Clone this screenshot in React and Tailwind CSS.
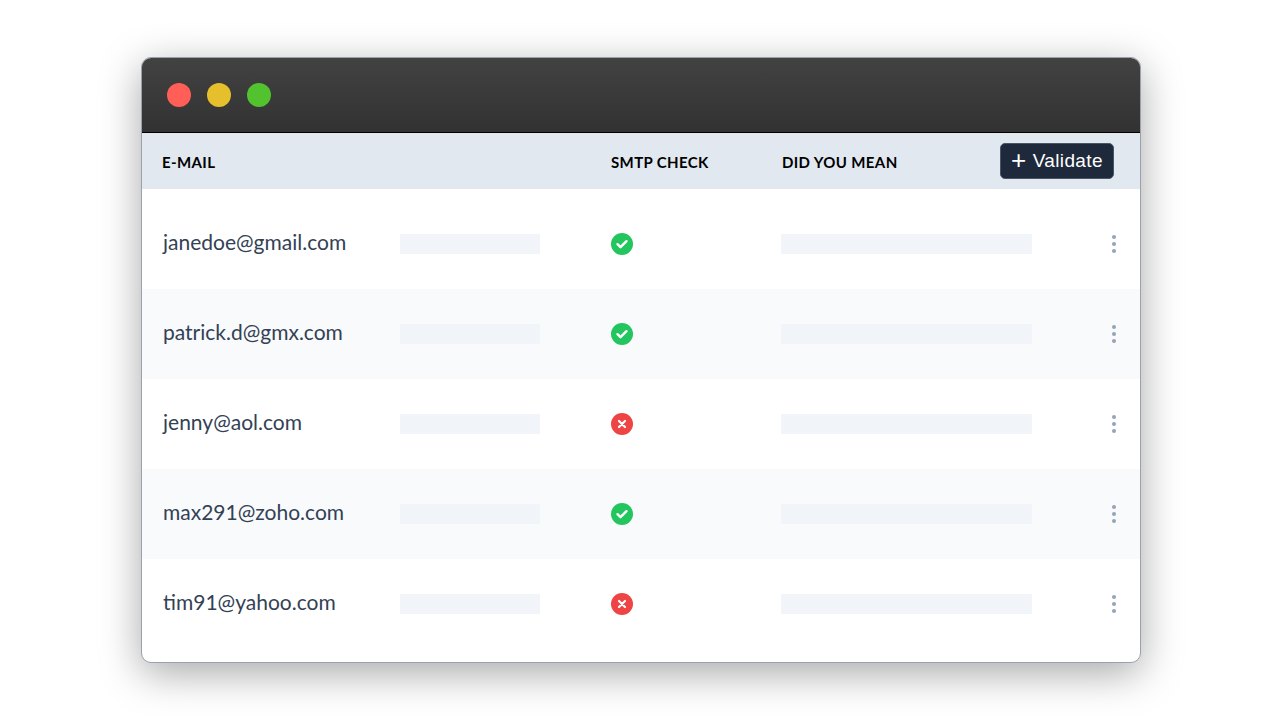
import React from 'react';

const rows = [
  { email: 'janedoe@gmail.com', ok: true },
  { email: 'patrick.d@gmx.com', ok: true },
  { email: 'jenny@aol.com', ok: false },
  { email: 'max291@zoho.com', ok: true },
  { email: 'tim91@yahoo.com', ok: false },
];

const Status = ({ ok }) => (
  <svg width="22" height="22" viewBox="0 0 22 22">
    <circle cx="11" cy="11" r="11" fill={ok ? '#22c55e' : '#ef4444'} />
    {ok ? (
      <path d="M6.5 11.2l3 3 6-6" stroke="#fff" strokeWidth="2.4" fill="none" strokeLinecap="round" strokeLinejoin="round" />
    ) : (
      <path d="M8 8l6 6M14 8l-6 6" stroke="#fff" strokeWidth="2.2" fill="none" strokeLinecap="round" />
    )}
  </svg>
);

const App = () => {
  return (
    <div className="w-[1280px] h-[720px] bg-white pt-[57px] pl-[141px]" style={{ fontFamily: 'Lato, "Noto Sans", sans-serif' }}>
      <div className="w-[1000px] h-[606px] rounded-[10px] overflow-hidden border border-gray-400 bg-white shadow-[0_10px_40px_rgba(0,0,0,0.35)] flex flex-col">
        <div className="h-[75px] bg-gradient-to-b from-[#424242] to-[#323232] border-b border-black flex items-center pl-[25px] gap-[16px] shrink-0">
          <div className="w-6 h-6 rounded-full bg-[#ff5f57]" />
          <div className="w-6 h-6 rounded-full bg-[#e6bf2c]" />
          <div className="w-6 h-6 rounded-full bg-[#53c22f]" />
        </div>
        <div className="h-[56px] bg-[#e2e8f0] flex items-center pl-[20px] text-[15px] font-bold text-black tracking-wide shrink-0">
          <div className="w-[449px] pt-[3px]">E-MAIL</div>
          <div className="w-[171px] pt-[3px]">SMTP CHECK</div>
          <div className="w-[218px] pt-[3px]">DID YOU MEAN</div>
          <button className="h-[36px] w-[114px] bg-[#1e293b] rounded-[5px] border border-[#475569] text-white text-[19px] font-medium flex items-center justify-center gap-1.5" style={{ fontFamily: '"Liberation Sans", Arial, sans-serif' }}>
            <span className="text-[26px] leading-none -mt-[2px]">+</span>Validate
          </button>
        </div>
        <div className="h-[10px] shrink-0" />
        {rows.map((r, i) => (
          <div key={r.email} className={`h-[90px] flex items-center pl-[21px] shrink-0 ${i % 2 ? 'bg-[#f8fafc]' : 'bg-white'}`}>
            <div className="w-[237px] text-[21px] text-[#334155] -mt-[4px]">{r.email}</div>
            <div className="w-[140px] h-[20px] bg-[#f1f5f9]" />
            <div className="w-[71px]" />
            <Status ok={r.ok} />
            <div className="w-[148px]" />
            <div className="w-[251px] h-[20px] bg-[#f1f5f9]" />
            <div className="flex-1 flex justify-end pr-[24px]">
              <div className="flex flex-col gap-[3px]">
                <div className="w-[4px] h-[4px] rounded-full bg-[#94a3b8]" />
                <div className="w-[4px] h-[4px] rounded-full bg-[#94a3b8]" />
                <div className="w-[4px] h-[4px] rounded-full bg-[#94a3b8]" />
              </div>
            </div>
          </div>
        ))}
      </div>
    </div>
  );
};

export default App;
